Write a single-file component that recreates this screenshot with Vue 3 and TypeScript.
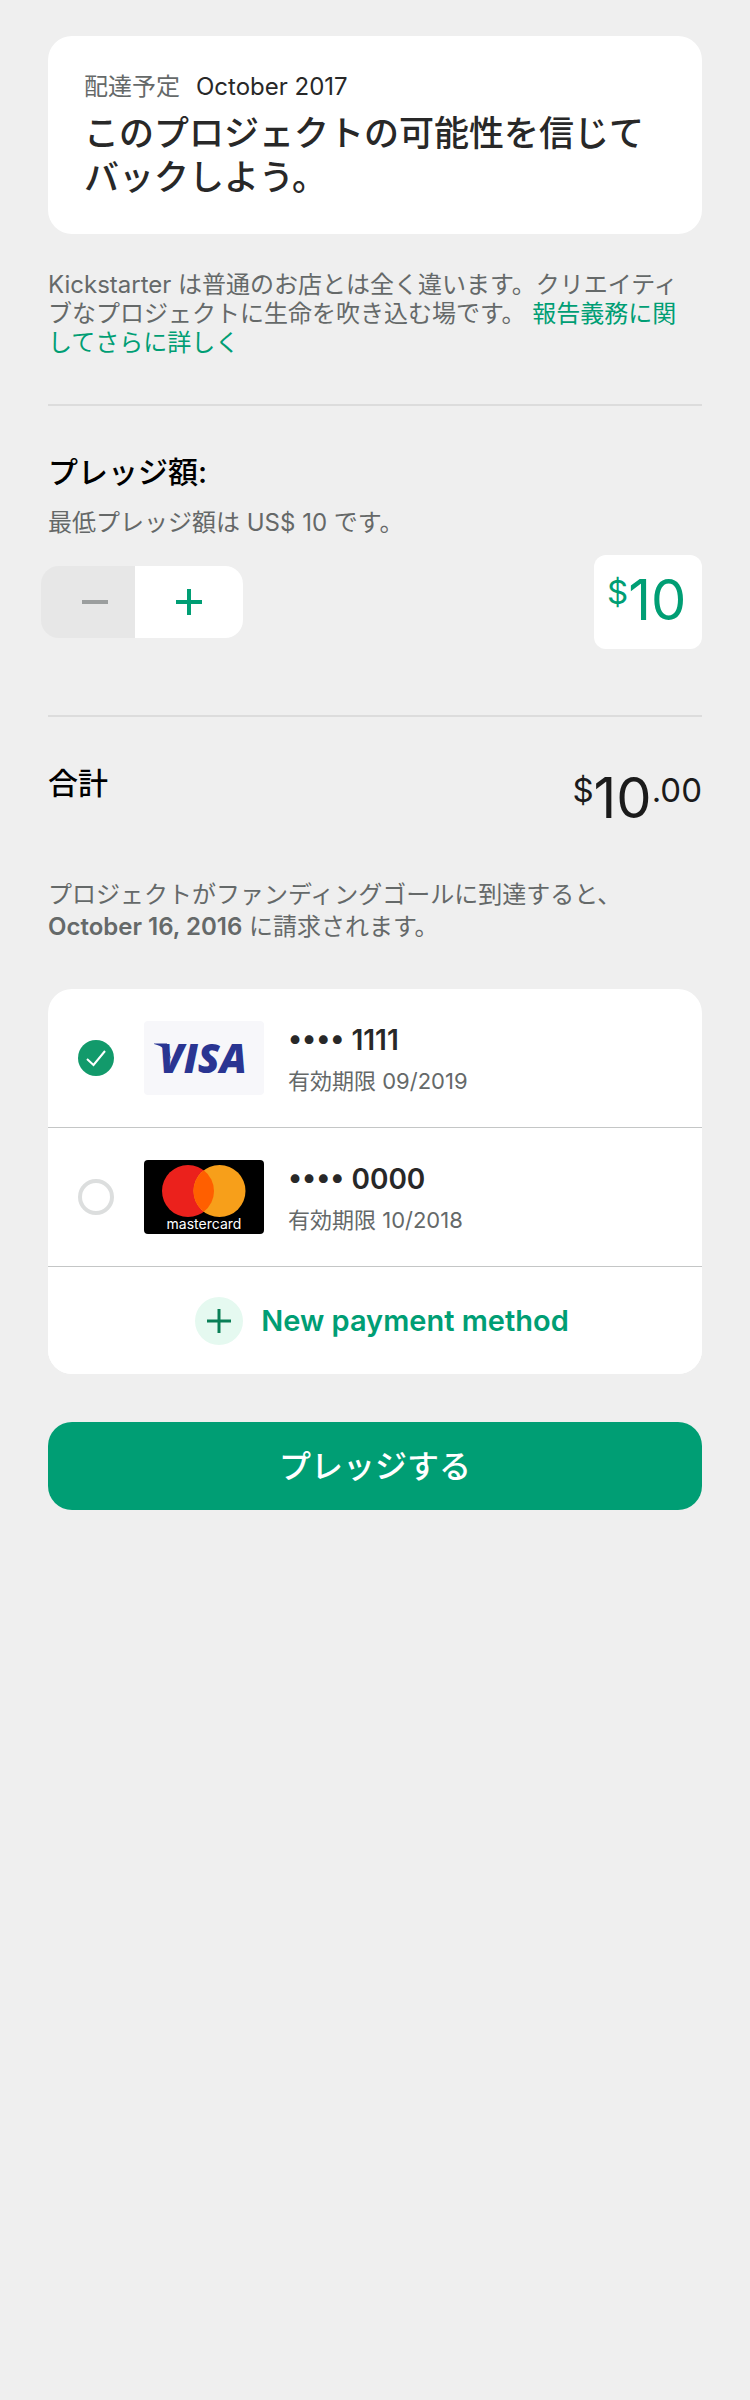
<script setup lang="ts">
import { computed, ref } from 'vue'

interface Card {
  id: string
  brand: 'visa' | 'mastercard'
  lastFour: string
  expires: string
}

const minimum = 10
const amount = ref<number>(10)
const selected = ref<string>('visa-1111')

const cards: Card[] = [
  { id: 'visa-1111', brand: 'visa', lastFour: '1111', expires: '09/2019' },
  { id: 'mc-0000', brand: 'mastercard', lastFour: '0000', expires: '10/2018' },
]

const atMinimum = computed(() => amount.value <= minimum)
</script>

<template>
  <main class="page">
    <section class="reward">
      <p class="delivery"><span class="muted">配達予定</span><span>October 2017</span></p>
      <h1>このプロジェクトの可能性を信じてバックしよう。</h1>
    </section>

    <p class="notice">
      Kickstarter は普通のお店とは全く違います。クリエイティブなプロジェクトに生命を吹き込む場です。
      <a href="#accountability">報告義務に関してさらに詳しく</a>
    </p>

    <section class="pledge">
      <h2><label for="amount">プレッジ額:</label></h2>
      <p class="minimum">最低プレッジ額は US$ 10 です。</p>
      <div class="controls">
        <div class="stepper">
          <button class="minus" type="button" aria-label="減らす" :disabled="atMinimum" @click="amount--">
            <svg width="26" height="26" viewBox="0 0 26 26"><path d="M0 13H26" /></svg>
          </button>
          <button class="plus" type="button" aria-label="増やす" @click="amount++">
            <svg width="26" height="26" viewBox="0 0 26 26"><path d="M0 13H26M13 0V26" /></svg>
          </button>
        </div>
        <div class="field">
          <span class="small">$</span>
          <input id="amount" v-model.number="amount" type="text" inputmode="numeric" />
        </div>
      </div>
    </section>

    <section class="total">
      <h2>合計</h2>
      <p class="sum"><span class="small">$</span><span class="big">{{ amount }}</span><span class="small">.00</span></p>
    </section>

    <p class="charge">
      プロジェクトがファンディングゴールに到達すると、<b>October 16, 2016</b> に請求されます。
    </p>

    <section class="methods">
      <label v-for="card in cards" :key="card.id" class="method" :for="card.id">
        <span class="radio">
          <input :id="card.id" v-model="selected" type="radio" name="card" :value="card.id" />
          <svg v-if="selected === card.id" width="36" height="36" viewBox="0 0 36 36">
            <path d="M9 19L15.500 25L27 11" />
          </svg>
        </span>
        <svg v-if="card.brand === 'visa'" class="brand" width="120" height="74" viewBox="0 0 120 74">
          <rect width="120" height="74" rx="4" fill="#f7f7fa" />
          <path d="M10 22.500H23L27 38C23 30 19 25 10 23Z" fill="#2a3592" />
          <text class="visa" x="15" y="52">VISA</text>
        </svg>
        <svg v-else class="brand" width="120" height="74" viewBox="0 0 120 74">
          <rect width="120" height="74" rx="4" />
          <circle cx="44" cy="31" r="26" fill="#eb211c" />
          <circle cx="75.500" cy="31" r="26" fill="#f79f1a" />
          <path d="M59.750 10.300A26 26 0 0 1 59.750 51.700A26 26 0 0 1 59.750 10.300Z" fill="#ff5f00" />
          <text class="mastercard" x="60" y="69" text-anchor="middle">mastercard</text>
        </svg>
        <span class="details">
          <span class="number">•••• {{ card.lastFour }}</span>
          <span class="expiry">有効期限 {{ card.expires }}</span>
        </span>
      </label>
      <button class="add" type="button">
        <svg width="48" height="48" viewBox="0 0 48 48">
          <circle cx="24" cy="24" r="24" fill="#e5f9f0" />
          <path d="M12 24H36M24 12V36" />
        </svg>
        New payment method
      </button>
    </section>

    <button class="submit" type="button">プレッジする</button>
  </main>
</template>

<style>
body {
  margin: 0;
  background: #efefef;
}
</style>

<style scoped>
.page {
  box-sizing: border-box;
  min-height: 100vh;
  padding: 36px 48px;
  background: #efefef;
  color: #282828;
  font-family: Inter, "Noto Sans CJK JP", sans-serif;
  font-size: 24px;
  line-height: 29px;
}

h1,
h2,
p {
  margin: 0;
}

button,
input {
  margin: 0;
  padding: 0;
  border: 0;
  font: inherit;
}

h2 {
  color: #000;
  font-size: 30px;
  font-weight: 500;
  line-height: 36px;
}

.reward {
  padding: 36px 36px 35px;
  border-radius: 24px;
  background: #fff;
}

.delivery {
  display: flex;
  gap: 16px;
  line-height: 30px;
  margin-bottom: 9px;
}

.muted {
  color: #656969;
}

h1 {
  font-size: 35px;
  font-weight: 500;
  line-height: 44px;
}

.notice {
  margin-top: 36px;
  padding-right: 12px;
  color: #656969;
}

a {
  color: #009e74;
  text-decoration: none;
}

.pledge {
  margin-top: 47px;
  padding-top: 48px;
  border-top: 2px solid #dcdcdc;
}

.minimum {
  margin-top: 18px;
  color: #656868;
}

.controls {
  display: flex;
  align-items: center;
  justify-content: space-between;
  margin: 18px 0 0 -7px;
}

.stepper {
  display: flex;
  height: 72px;
  overflow: hidden;
  border-radius: 18px;
}

.stepper button {
  display: flex;
  align-items: center;
  stroke: #009e74;
  stroke-width: 4;
  background: #fff;
}

.stepper .minus {
  padding: 0 27px 0 41px;
  background: #e7e7e7;
  stroke: #9b9e9e;
}

.stepper .plus {
  padding: 0 41px;
}

.field {
  display: flex;
  box-sizing: border-box;
  width: 108px;
  height: 94px;
  padding: 12px 0 0 13px;
  border-radius: 12px;
  background: #fff;
  color: #009e74;
}

.small {
  font-size: 33px;
  line-height: 51px;
}

.field input,
.big {
  min-width: 0;
  font-size: 56px;
  line-height: 66px;
}

.field input {
  width: 74px;
  height: 66px;
  background: transparent;
  color: #009e74;
}

.total {
  display: flex;
  justify-content: space-between;
  margin-top: 66px;
  padding-top: 48px;
  border-top: 2px solid #dcdcdc;
}

.sum {
  display: flex;
  color: #1b1b1b;
}

.charge {
  margin-top: 48px;
  color: #656969;
  line-height: 32px;
}

b {
  font-weight: 600;
}

.methods {
  margin-top: 46px;
  overflow: hidden;
  border-radius: 24px;
  background: #fff;
}

.method {
  display: flex;
  align-items: center;
  height: 138px;
  padding-left: 30px;
  border-bottom: 1px solid #c4c6c6;
}

.radio {
  display: grid;
  width: 36px;
  height: 36px;
  margin-right: 30px;
}

.radio input,
.radio svg {
  grid-area: 1 / 1;
}

.radio input {
  box-sizing: border-box;
  width: 36px;
  height: 36px;
  appearance: none;
  border: 4px solid #dcdede;
  border-radius: 50%;
}

.radio input:checked {
  border: 0;
  background: #129a6b;
}

.radio svg {
  z-index: 1;
  pointer-events: none;
  fill: none;
  stroke: #fff;
  stroke-width: 2;
}

.brand {
  margin-right: 24px;
}

.visa {
  fill: #2a3592;
  font-family: "Open Sans", sans-serif;
  font-size: 40px;
  font-style: italic;
  font-weight: 800;
}

.mastercard {
  fill: #fff;
  font-family: Inter, sans-serif;
  font-size: 14px;
}

.details {
  display: flex;
  flex-direction: column;
  gap: 8px;
  padding-top: 4px;
}

.number {
  font-size: 28px;
  font-weight: 600;
  line-height: 34px;
}

.expiry {
  color: #656969;
  font-size: 22px;
  line-height: 32px;
}

.add {
  display: flex;
  align-items: center;
  justify-content: center;
  gap: 18px;
  width: 100%;
  height: 107px;
  padding-left: 14px;
  background: #fff;
  color: #009e74;
  font-size: 29px;
  font-weight: 600;
}

.add path {
  stroke: #0a7f57;
  stroke-width: 3;
}

.submit {
  width: 100%;
  height: 88px;
  margin-top: 48px;
  border-radius: 24px;
  background: #009e74;
  color: #fff;
  font-size: 32px;
  font-weight: 500;
}
</style>
